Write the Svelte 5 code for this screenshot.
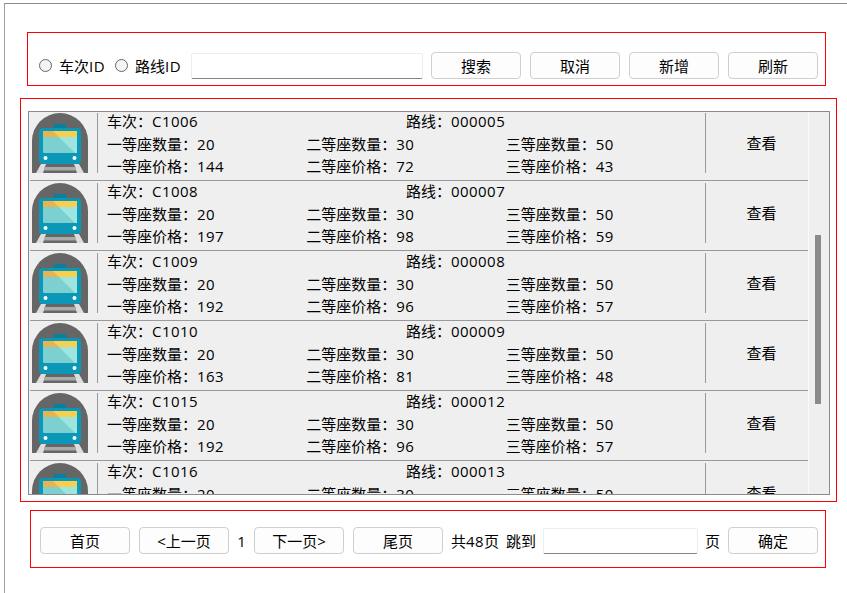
<script>
  // Zugdaten für die Liste
  const trains = [
    { id: "C1006", route: "000005", p1: 144, p2: 72, p3: 43 },
    { id: "C1008", route: "000007", p1: 197, p2: 98, p3: 59 },
    { id: "C1009", route: "000008", p1: 192, p2: 96, p3: 57 },
    { id: "C1010", route: "000009", p1: 163, p2: 81, p3: 48 },
    { id: "C1015", route: "000012", p1: 192, p2: 96, p3: 57 },
    { id: "C1016", route: "000013", p1: 192, p2: 96, p3: 57 },
  ];
</script>

<div class="window">
  <!-- Suchleiste -->
  <div class="search-box">
    <label class="radio"><span class="dot"></span><span>车次<em class="num">ID</em></span></label>
    <label class="radio second"><span class="dot"></span><span>路线<em class="num">ID</em></span></label>
    <div class="field search-field"></div>
    <button class="btn">搜索</button>
    <button class="btn">取消</button>
    <button class="btn">新增</button>
    <button class="btn">刷新</button>
  </div>

  <!-- Liste mit Scrollbar -->
  <div class="list-box">
    <div class="list">
      <div class="rows">
        {#each trains as t}
          <div class="row">
            <div class="pic">
              <svg width="56" height="60" viewBox="0 0 56 60">
                <path d="M0 60V28a28 28 0 0 1 56 0v32z" fill="#666" />
                <path d="M4 60l5-9h5l-3 9zM52 60l-5-9h-5l3 9z" fill="#ddd" />
                <rect x="12" y="54" width="32" height="3.5" fill="#aaa" />
                <path d="M21 15l1.5-4h11l1.5 4z" fill="#0a7f9e" />
                <rect x="7" y="15" width="42" height="36" rx="4" fill="#0b97b8" />
                <rect x="11" y="18" width="34" height="22" rx="1" fill="#7dd0d0" />
                <path d="M21 18h24v22h-2z" fill="#9fe5df" />
                <rect x="11" y="18" width="34" height="6" fill="#f9cf50" />
                <path d="M11 18h10l6 6H11z" fill="#e6b552" />
                <circle cx="13.5" cy="45" r="2" fill="#fff" />
                <circle cx="42.5" cy="45" r="2" fill="#fff" />
              </svg>
            </div>
            <div class="info">
              <div class="line head">
                <span>车次：<em class="num">{t.id}</em></span>
                <span>路线：<em class="num">{t.route}</em></span>
              </div>
              <div class="line">
                <span>一等座数量：<em class="num">20</em></span>
                <span>二等座数量：<em class="num">30</em></span>
                <span>三等座数量：<em class="num">50</em></span>
              </div>
              <div class="line">
                <span>一等座价格：<em class="num">{t.p1}</em></span>
                <span>二等座价格：<em class="num">{t.p2}</em></span>
                <span>三等座价格：<em class="num">{t.p3}</em></span>
              </div>
            </div>
            <div class="action">查看</div>
          </div>
        {/each}
      </div>
      <div class="scrollbar"><div class="thumb"></div></div>
    </div>
  </div>

  <!-- Seitennavigation -->
  <div class="pager-box">
    <button class="btn">首页</button>
    <button class="btn">&lt;上一页</button>
    <span class="page-no">1</span>
    <button class="btn">下一页&gt;</button>
    <button class="btn">尾页</button>
    <span class="total">共<em class="num">48</em>页</span>
    <span class="jump">跳到</span>
    <div class="field jump-field"></div>
    <span class="unit">页</span>
    <button class="btn">确定</button>
  </div>
</div>

<style>
  :global(body) {
    background: #fff;
    overflow: hidden;
  }
  .window {
    box-sizing: border-box;
    width: 847px;
    height: 590px;
    margin-top: 3px;
    margin-left: 4px;
    border-top: 1px solid #8a8a8a;
    border-left: 1px solid #a0a0a0;
    padding: 28px 0 0 15px;
    font-family: "Open Sans", "Noto Sans CJK SC", sans-serif;
    font-size: 15px;
    color: #000;
  }
  /* Ziffern und lateinische Zeichen laufen im Original etwas breiter */
  .num {
    font-style: normal;
    letter-spacing: 0.45px;
  }
  .search-box {
    box-sizing: border-box;
    width: 799px;
    height: 54px;
    margin-left: 7px;
    border: 1px solid #f00;
    display: flex;
    align-items: center;
    padding: 13px 6px 0 11px;
  }
  .radio {
    display: flex;
    align-items: center;
    gap: 7px;
    line-height: 26px;
  }
  .radio.second {
    margin-left: 10px;
  }
  .dot {
    box-sizing: border-box;
    width: 13px;
    height: 13px;
    border-radius: 50%;
    border: 1px solid #666;
    background: #f4f4f4;
  }
  .field {
    box-sizing: border-box;
    height: 26px;
    background: #fff;
    border: 1px solid #ececec;
    border-bottom: 1px solid #858585;
    border-radius: 2px;
  }
  .search-field {
    width: 232px;
    margin: 0 8px 0 10px;
  }
  .btn {
    box-sizing: border-box;
    width: 90px;
    height: 27px;
    padding: 2px 0 0;
    background: #fdfdfd;
    border: 1px solid #cfcfcf;
    border-radius: 4px;
    font: inherit;
    line-height: 23px;
    color: inherit;
  }
  .search-box .btn + .btn {
    margin-left: 9px;
  }
  .list-box {
    box-sizing: border-box;
    width: 817px;
    height: 404px;
    margin-top: 12px;
    border: 1px solid #f00;
    padding: 12px 6px 6px 7px;
  }
  .list {
    box-sizing: border-box;
    height: 384px;
    border: 1px solid #8c8c8c;
    display: flex;
    overflow: hidden;
    background: #efefef;
  }
  .rows {
    width: 779px;
    overflow: hidden;
    padding-left: 1px;
    box-sizing: border-box;
  }
  .row {
    box-sizing: border-box;
    height: 70px;
    display: flex;
    border-bottom: 1px solid #9a9a9a;
    padding-top: 2px;
  }
  .row:first-child {
    margin-top: -1px;
  }
  .pic {
    width: 67px;
    height: 60px;
    flex: none;
    padding-left: 2px;
    box-sizing: border-box;
  }
  .pic svg {
    display: block;
  }
  .info {
    width: 608px;
    height: 60px;
    flex: none;
    border-left: 1px solid #9a9a9a;
    box-sizing: border-box;
    padding-left: 9px;
  }
  .line {
    display: flex;
    height: 22px;
    line-height: 22px;
    white-space: nowrap;
  }
  .line.head {
    height: 20px;
    line-height: 16px;
  }
  .line > span {
    width: 199.7px;
  }
  .line.head > span {
    width: 299px;
  }
  .action {
    flex: 1;
    height: 60px;
    border-left: 1px solid #9a9a9a;
    box-sizing: border-box;
    padding: 0 0 2px 9px;
    display: flex;
    align-items: center;
    justify-content: center;
  }
  .scrollbar {
    flex: 1;
    background: #efefef;
    border-left: 1px solid #fafafa;
    padding: 123px 0 0 6px;
  }
  .thumb {
    width: 6px;
    height: 169px;
    background: #8a8a8a;
  }
  .pager-box {
    box-sizing: border-box;
    width: 796px;
    height: 58px;
    margin: 8px 0 0 10px;
    border: 1px solid #f00;
    display: flex;
    align-items: center;
    padding: 3px 6px 0 9px;
  }
  .page-no {
    width: 25px;
    text-align: center;
  }
  .pager-box .btn:nth-child(2) {
    margin-left: 9px;
  }
  .pager-box .btn:nth-child(5) {
    margin-left: 9px;
  }
  .total {
    margin-left: 8px;
  }
  .jump {
    margin-left: 7px;
  }
  .jump-field {
    width: 155px;
    margin-left: 7px;
  }
  .unit {
    margin-left: 7px;
  }
  .pager-box .btn:last-child {
    margin-left: 8px;
  }
</style>
